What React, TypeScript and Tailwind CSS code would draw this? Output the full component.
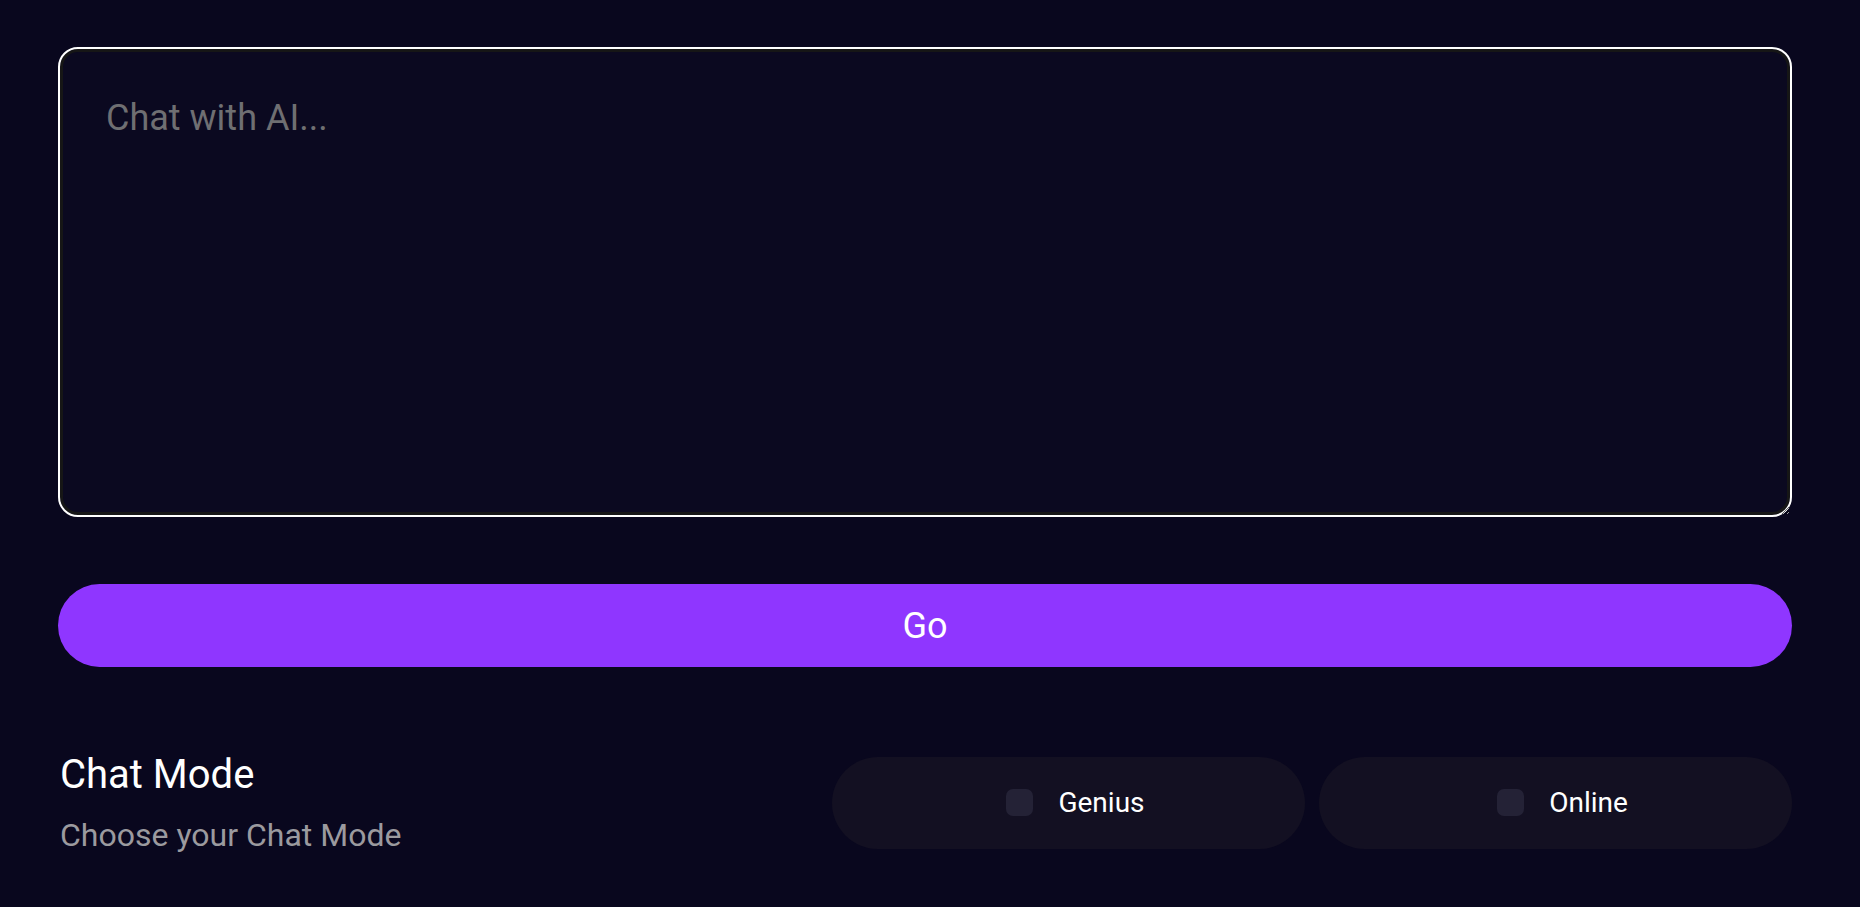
import React, { useState } from 'react';

const ModeToggle = ({ label, checked, onChange }: { label: string; checked: boolean; onChange: () => void }) => (
  <button
    type="button"
    onClick={onChange}
    className="flex h-[92px] w-[473px] items-center justify-center gap-[25px] rounded-full bg-[#131022] pl-[14px]"
  >
    <span
      className={`h-[27px] w-[27px] rounded-[7px] ${checked ? 'bg-[#8f36ff]' : 'bg-[#242236]'}`}
    ></span>
    <span className="text-[28px] text-white">{label}</span>
  </button>
);

const App = () => {
  const [text, setText] = useState('');
  const [genius, setGenius] = useState(false);
  const [online, setOnline] = useState(false);

  return (
    <div
      className="min-h-screen bg-[#09071e] pl-[58px] pr-[68px] pt-[47px]"
      style={{ fontFamily: 'Roboto, "Noto Sans", sans-serif' }}
    >
      <textarea
        value={text}
        onChange={(e) => setText(e.target.value)}
        placeholder="Chat with AI..."
        className="block h-[470px] w-full rounded-[20px] border-2 border-white bg-[#0b0920] px-[46px] py-[42px] text-[36px] leading-[1.5] text-white shadow-[inset_0_0_0_3px_#161616] outline-none placeholder:text-[#6f6f72]"
      />

      <button
        type="button"
        className="mt-[67px] flex h-[83px] w-full items-center justify-center rounded-full bg-[#8f36ff] text-[36px] text-white"
      >
        Go
      </button>

      <div className="mt-[84px] flex items-center justify-between">
        <div className="flex flex-col gap-[17px] pl-[2px]">
          <h2 className="text-[40px] leading-[1.2] text-white">Chat Mode</h2>
          <p className="text-[32px] leading-[1.2] text-[#9b9a9f]">Choose your Chat Mode</p>
        </div>
        <div className="flex gap-[14px]">
          <ModeToggle label="Genius" checked={genius} onChange={() => setGenius(!genius)} />
          <ModeToggle label="Online" checked={online} onChange={() => setOnline(!online)} />
        </div>
      </div>
    </div>
  );
};

export default App;
